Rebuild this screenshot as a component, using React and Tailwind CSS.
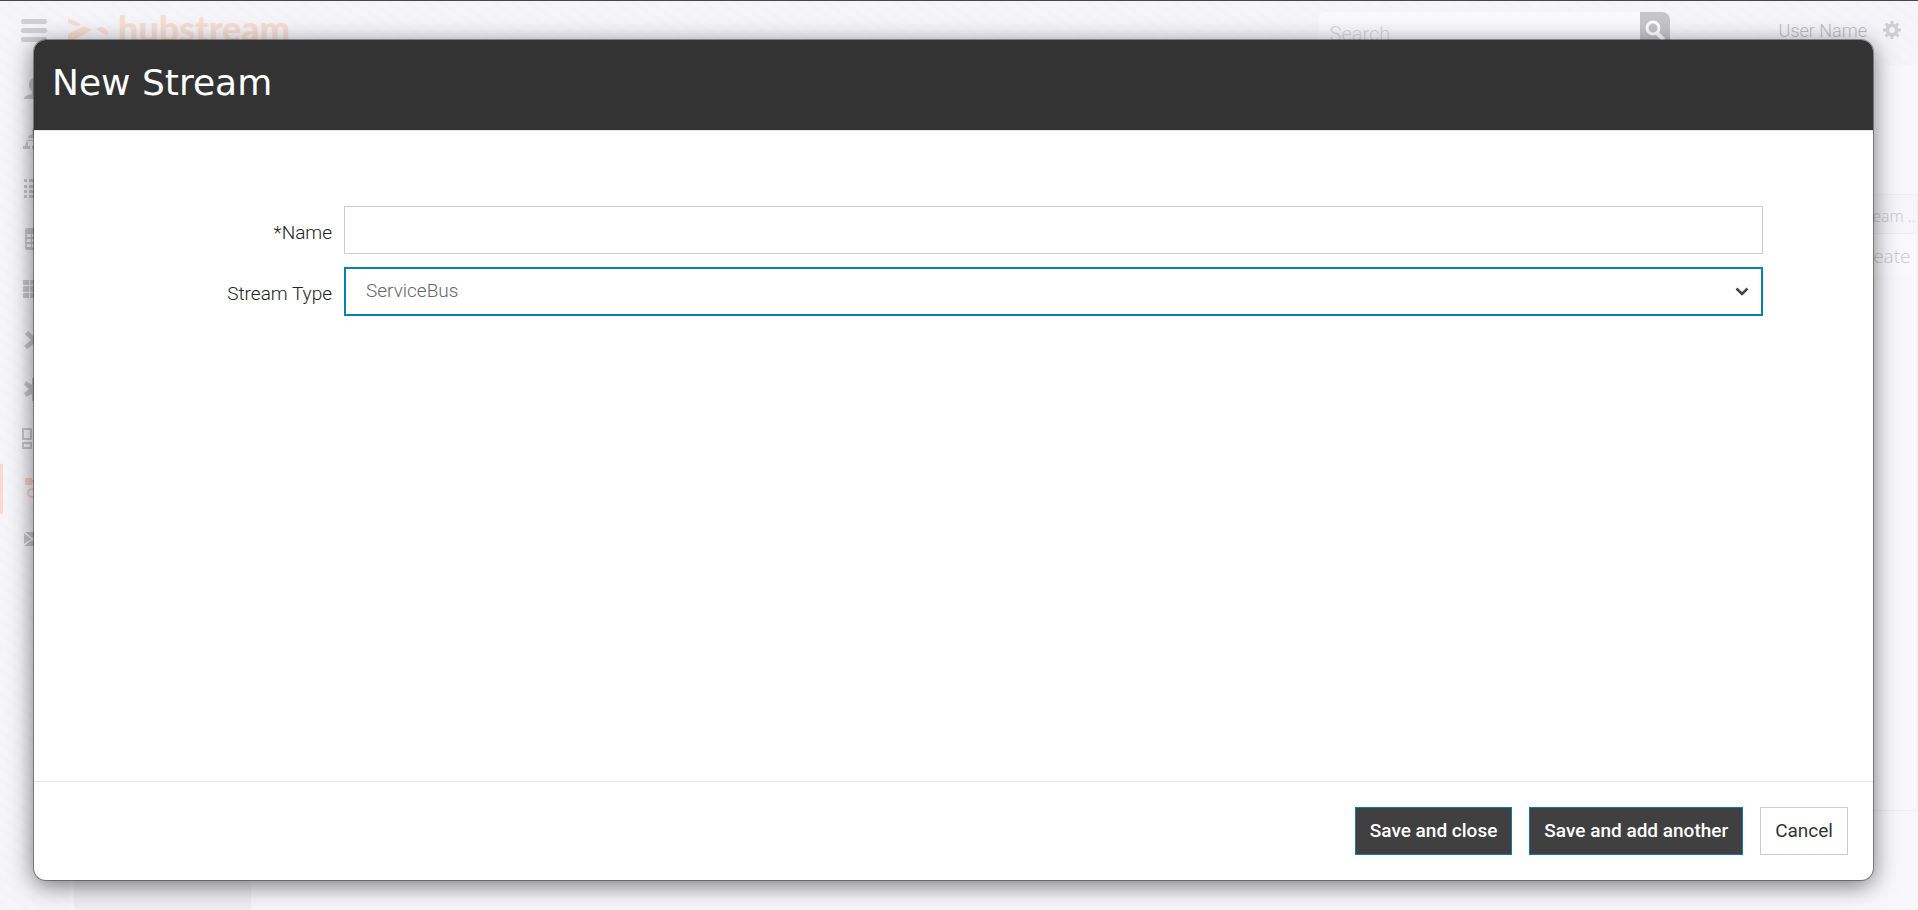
import React, { useState } from 'react';

const menuItems = [
  {
    name: 'Users',
    shapes: <path d="M11 0c-4 0-6 3-6 6 0 4 1 6 3 7v3c-3 1-8 1-8 5h22c0-4-5-4-8-5v-3c2-1 3-3 3-7 0-3-2-6-6-6z" />,
  },
  {
    name: 'Hierarchy',
    shapes: (
      <path d="M11 0a3 3 0 0 1 3 3q0 2-1 3 5 1 5 4H4q0-3 5-4-1-1-1-3a3 3 0 0 1 3-3zM2 12h18v1H2zM2 14h2v4h2v3H-1v-3h2zM10 14h2v4h2v3H8v-3h2zM18 14h2v4h2v3h-6v-3h2z" />
    ),
  },
  {
    name: 'Lists',
    shapes: <path d="M0 1h3v3H0zM5 1h17v3H5zM0 7h3v3H0zM5 7h17v3H5zM0 12h3v3H0zM5 12h17v3H5zM0 17h3v3H0zM5 17h17v3H5z" />,
  },
  {
    name: 'Tables',
    shapes: (
      <path
        fillRule="evenodd"
        d="M3 0h18a2 2 0 0 1 2 2v18a2 2 0 0 1-2 2H3a2 2 0 0 1-2-2V2a2 2 0 0 1 2-2zM3 6v3h4V6zM8 6v3h6V6zM3 11v3h4v-3zM8 11v3h6v-3zM3 16v3h4v-3zM8 16v3h6v-3z"
      />
    ),
  },
  {
    name: 'Grid',
    shapes: <path d="M-1 2h6v5h-6zM6 2h6v5H6zM13 2h6v5h-6zM-1 8h6v6h-6zM6 8h6v6H6zM13 8h6v6h-6zM-1 15h6v5h-6zM6 15h6v5H6zM13 15h6v5h-6z" />,
  },
  {
    name: 'Tools',
    shapes: <path d="M1 6l3-3 8 7 7-7 3 3-8 6 7 6-3 3-8-5-7 5-3-3 7-6z" />,
  },
  {
    name: 'Rules',
    shapes: <path d="M8 0h5v7l6-4 3 4-7 4 7 4-3 4-6-3v7H8v-7l-6 3-2-4 5-4-5-4 2-4 6 4z" />,
  },
  {
    name: 'Dashboards',
    shapes: (
      <path
        fillRule="evenodd"
        d="M-2 0H8v12H-2zM0 2v8h6V2zM-2 14H8v7H-2zM0 16v3h6v-3zM12 0h10v7H12zM14 2v3h6V2zM12 9h10v12H12zM14 11v8h6v-8z"
      />
    ),
  },
  {
    name: 'Streams',
    active: true,
    shapes: (
      <>
        <path d="M1 0h7v2h12v3H8v2H1z" />
        <path d="M12 11H8a4 4 0 0 0 0 8h4" fill="none" stroke="currentColor" strokeWidth="2" />
      </>
    ),
  },
  {
    name: 'Mail',
    shapes: <path d="M1 4h20l-10 8zM0 5l7 6-7 5zM22 5l-7 6 7 5zM0 18l8-6 3 2 3-2 8 6z" />,
  },
];

const Header = () => (
  <header className="h-16 flex items-start text-gray-400">
    <button aria-label="Toggle menu" className="mt-[18px] ml-[21px] w-[26px] flex flex-col gap-1">
      <span className="h-[5px] w-full rounded-xs bg-[#d0cfd4]" />
      <span className="h-[5px] w-full rounded-xs bg-[#d0cfd4]" />
      <span className="h-[5px] w-full rounded-xs bg-[#d0cfd4]" />
    </button>
    <a href="#" className="ml-[21px] mt-[11px] flex items-start gap-2.5 text-[#f8ddd3]">
      <svg width="40" height="30" viewBox="0 0 40 30" className="mt-1.5 fill-current">
        <path d="M0 0l13 6q-2 3-5 2L0 5z" />
        <path d="M0 16l14-7q4-1 10 3L2 24H0z" />
        <path d="M28 11q4-3 7-1.500 6 3 5 7.500l-4-1z" />
      </svg>
      <span className="font-['Lato','Open_Sans',sans-serif] font-black text-4xl leading-8">hubstream</span>
    </a>
    <div className="ml-auto mt-[11px] w-[352px] h-10 flex rounded-lg overflow-hidden bg-[#f9f8fd]">
      <input
        type="text"
        aria-label="Search"
        placeholder="Search"
        className="flex-1 min-w-0 px-3 pt-1 text-xl font-light placeholder:text-[#d8d8dc] focus:outline-none"
      />
      <button aria-label="Run search" className="w-[30px] flex justify-center items-start pt-2 bg-[#c6c5ca] text-white">
        <svg width="20" height="22" viewBox="0 0 20 22" fill="none" stroke="currentColor">
          <circle cx="8" cy="8" r="6" strokeWidth="3" />
          <path d="M12 13l7 7" strokeWidth="4" />
        </svg>
      </button>
    </div>
    <span className="ml-[109px] mt-[18px] text-lg leading-6 font-light text-[#bdbdc2]">User Name</span>
    <button aria-label="Settings" className="mt-5 ml-4 mr-[17px] text-[#cfcfd4]">
      <svg width="18" height="18" viewBox="0 0 18 18">
        <g fill="currentColor">
          <path d="M7.500 0h3v18h-3z" />
          <path d="M0 7.500h18v3H0z" />
          <path d="M7.500 0h3v18h-3z" transform="rotate(45 9 9)" />
          <path d="M7.500 0h3v18h-3z" transform="rotate(-45 9 9)" />
        </g>
        <circle cx="9" cy="9" r="4.700" fill="none" stroke="currentColor" strokeWidth="3.600" />
        <circle cx="9" cy="9" r="2.900" fill="#f2f4f8" />
      </svg>
    </button>
  </header>
);

const Sidebar = () => (
  <nav className="w-[70px] -mt-px">
    {menuItems.map((item) => (
      <a
        key={item.name}
        href="#"
        aria-label={item.name}
        className={`h-[50px] flex items-center border-l-[3px] pl-[21px] ${
          item.active ? 'border-[#fbd9d0] text-[#f8cfc4]' : 'border-transparent text-[#c6c6ca]'
        }`}
      >
        <svg width="22" height="22" viewBox="0 0 22 22" className="fill-current overflow-visible">
          {item.shapes}
        </svg>
      </a>
    ))}
  </nav>
);

const NewStreamDialog = () => {
  const [name, setName] = useState('');
  const [streamType, setStreamType] = useState('ServiceBus');

  return (
    <div
      role="dialog"
      aria-labelledby="dialog-title"
      className="absolute top-[39px] bottom-[30px] left-[34px] right-[45px] flex flex-col rounded-xl overflow-hidden bg-white shadow-[0_0_0_1px_rgba(0,0,0,0.35),0_5px_25px_rgba(0,0,0,0.55)]"
    >
      {/* Title bar */}
      <div className="h-[90px] shrink-0 px-[18px] pt-[21px] bg-[#333]">
        <h1 id="dialog-title" className="font-['DejaVu_Sans',sans-serif] text-4xl leading-11 text-white">
          New Stream
        </h1>
      </div>

      {/* Form */}
      <form className="flex-1 border-t border-[#e5e5e5] pt-[75px] pl-16 pr-[110px] flex flex-col gap-[13px] text-[19px] font-light">
        <div className="flex items-center">
          <label htmlFor="stream-name" className="w-[246px] pr-3 pt-1.5 text-right text-[#222]">
            *Name
          </label>
          <input
            id="stream-name"
            type="text"
            value={name}
            onChange={(e) => setName(e.target.value)}
            className="flex-1 h-12 px-5 border border-[#ccc] focus:outline-none"
          />
        </div>
        <div className="flex items-center">
          <label htmlFor="stream-type" className="w-[246px] pr-3 pt-1.5 text-right text-[#222]">
            Stream Type
          </label>
          <div className="relative flex-1">
            <select
              id="stream-type"
              value={streamType}
              onChange={(e) => setStreamType(e.target.value)}
              className="block w-full h-[49px] px-5 appearance-none bg-white border-2 border-[#0681ab] text-[#666] focus:outline-none"
            >
              <option>ServiceBus</option>
            </select>
            <svg
              width="14"
              height="9"
              viewBox="0 0 14 9"
              className="absolute right-3.5 top-5 pointer-events-none fill-none stroke-[#444]"
            >
              <path d="M1.500 1.500L7 7l5.500-5.500" strokeWidth="2.500" />
            </svg>
          </div>
        </div>
      </form>

      {/* Footer */}
      <div className="h-[99px] shrink-0 border-t border-[#e5e5e5] px-[25px] pt-[25px] flex justify-end items-start gap-[17px] text-[19px]">
        <button className="h-12 px-3.5 bg-[#404040] border border-[#0681ab] text-white font-medium">Save and close</button>
        <button className="h-12 px-3.5 bg-[#404040] border border-[#0681ab] text-white font-medium">Save and add another</button>
        <button className="h-12 px-3.5 bg-white border border-[#ccc] text-[#333]">Cancel</button>
      </div>
    </div>
  );
};

const App = () => (
  <div className="relative h-screen overflow-hidden flex flex-col border-t border-[#4a464c] font-['Roboto',sans-serif] bg-[#f4f4f9] bg-[repeating-linear-gradient(35deg,#f5f5fa_0px,#f5f5fa_4px,#f3f3f8_7px,#f5f5fa_10px)]">
    <Header />
    <div className="flex-1 min-h-0 flex">
      <Sidebar />
      <aside className="w-[181px] border-l-4 border-[#f8f8fc] bg-[#f0f0f4]" />
      <main className="flex-1 bg-[#f7f7fc] pt-[129px] font-['Open_Sans',sans-serif] font-light text-[#c8c8cd]">
        <section className="h-[617px] border border-l-0 border-[#eeeef3]">
          <div className="h-[39px] pt-1 flex items-center justify-end border-b border-[#eeeef3] bg-[#f5f5fa] text-base">
            <span className="w-[65px] overflow-hidden whitespace-nowrap">Stream ...</span>
          </div>
          <div className="h-10 pt-1 pr-[7px] flex items-center justify-end bg-[#f9f9fd] text-[19px]">
            <span className="w-14 overflow-hidden whitespace-nowrap">Create</span>
          </div>
        </section>
      </main>
    </div>
    <NewStreamDialog />
  </div>
);

export default App;
